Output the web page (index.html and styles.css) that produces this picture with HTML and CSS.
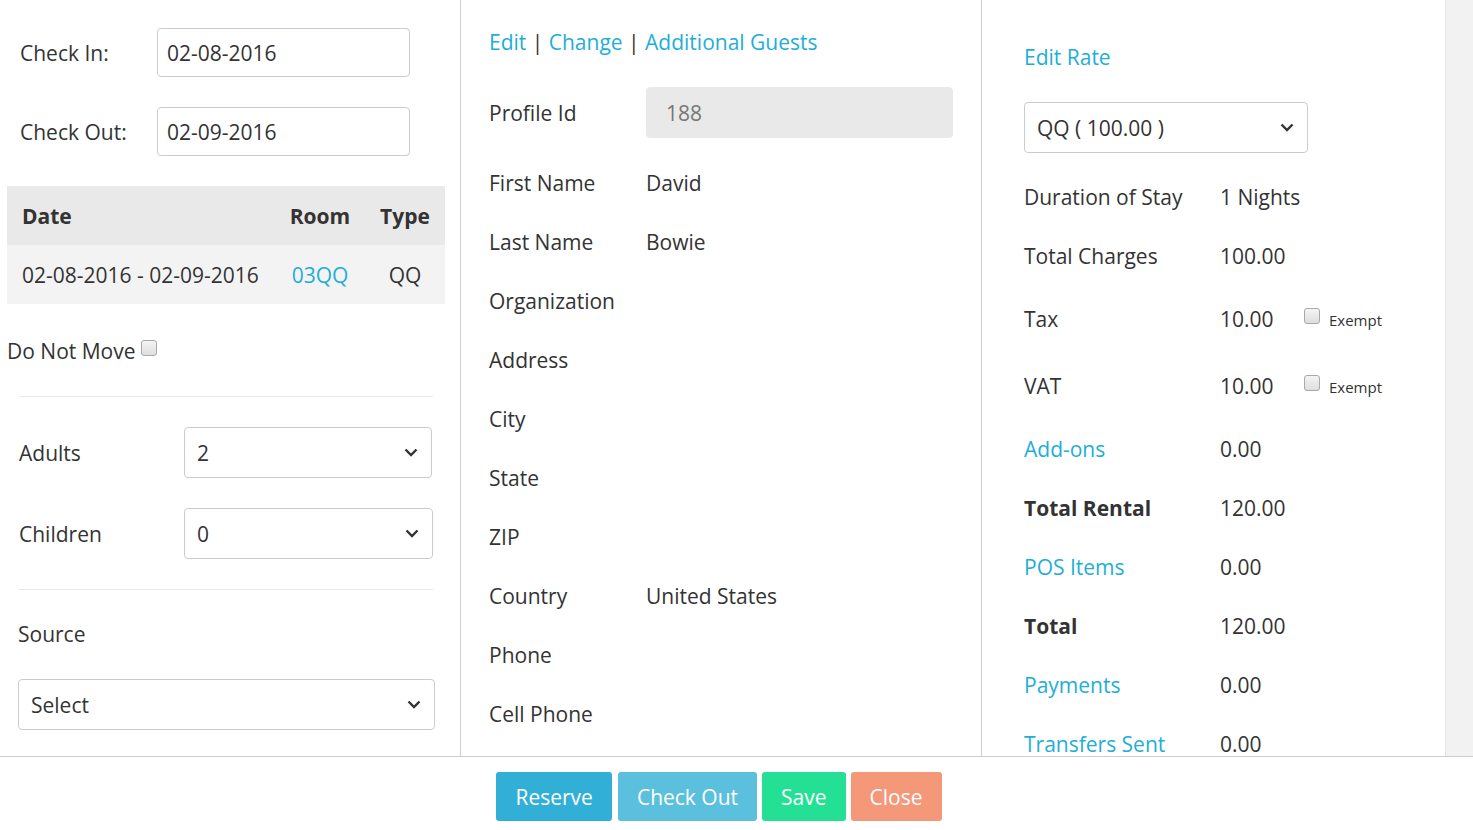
FILE: index.html
```html
<!DOCTYPE html>
<html>
<head>
<meta charset="utf-8">
<link rel="stylesheet" href="styles.css">
</head>
<body>
<div class="page">
  <div class="main">
    <div class="col col1">
      <div class="frow first">
        <label class="flabel">Check In:</label>
        <div class="input date">02-08-2016</div>
      </div>
      <div class="frow">
        <label class="flabel">Check Out:</label>
        <div class="input date">02-09-2016</div>
      </div>
      <div class="rtable">
        <div class="rt-head">
          <div class="c-date">Date</div>
          <div class="c-room">Room</div>
          <div class="c-type">Type</div>
        </div>
        <div class="rt-row">
          <div class="c-date">02-08-2016 - 02-09-2016</div>
          <div class="c-room"><a class="link">03QQ</a></div>
          <div class="c-type">QQ</div>
        </div>
      </div>
      <div class="dnm">Do Not Move <span class="cbox"></span></div>
      <div class="sep"></div>
      <div class="srow first">
        <label class="slabel">Adults</label>
        <div class="select occ">2<svg class="chev" viewBox="0 0 14 9"><path d="M1.5 1.5 L7 7 L12.5 1.5" /></svg></div>
      </div>
      <div class="srow">
        <label class="slabel">Children</label>
        <div class="select occ wide">0<svg class="chev" viewBox="0 0 14 9"><path d="M1.5 1.5 L7 7 L12.5 1.5" /></svg></div>
      </div>
      <div class="sep sep2"></div>
      <div class="source-label">Source</div>
      <div class="select source">Select<svg class="chev" viewBox="0 0 14 9"><path d="M1.5 1.5 L7 7 L12.5 1.5" /></svg></div>
    </div>

    <div class="col col2">
      <div class="links"><a class="link">Edit</a> | <a class="link">Change</a> | <a class="link">Additional Guests</a></div>
      <div class="prow profile">
        <div class="plabel">Profile Id</div>
        <div class="input readonly">188</div>
      </div>
      <div class="prow"><div class="plabel">First Name</div><div class="pval">David</div></div>
      <div class="prow"><div class="plabel">Last Name</div><div class="pval">Bowie</div></div>
      <div class="prow"><div class="plabel">Organization</div><div class="pval"></div></div>
      <div class="prow"><div class="plabel">Address</div><div class="pval"></div></div>
      <div class="prow"><div class="plabel">City</div><div class="pval"></div></div>
      <div class="prow"><div class="plabel">State</div><div class="pval"></div></div>
      <div class="prow"><div class="plabel">ZIP</div><div class="pval"></div></div>
      <div class="prow"><div class="plabel">Country</div><div class="pval">United States</div></div>
      <div class="prow"><div class="plabel">Phone</div><div class="pval"></div></div>
      <div class="prow"><div class="plabel">Cell Phone</div><div class="pval"></div></div>
    </div>

    <div class="col col3">
      <div class="edit-rate"><a class="link">Edit Rate</a></div>
      <div class="select rate">QQ ( 100.00 )<svg class="chev" viewBox="0 0 14 9"><path d="M1.5 1.5 L7 7 L12.5 1.5" /></svg></div>
      <div class="crow"><div class="clabel">Duration of Stay</div><div class="cval">1 Nights</div></div>
      <div class="crow"><div class="clabel">Total Charges</div><div class="cval">100.00</div></div>
      <div class="crow tall"><div class="clabel">Tax</div><div class="cval">10.00</div><span class="cbox ex"></span><span class="exempt">Exempt</span></div>
      <div class="crow tall"><div class="clabel">VAT</div><div class="cval">10.00</div><span class="cbox ex"></span><span class="exempt">Exempt</span></div>
      <div class="crow"><div class="clabel"><a class="link">Add-ons</a></div><div class="cval">0.00</div></div>
      <div class="crow"><div class="clabel bold">Total Rental</div><div class="cval">120.00</div></div>
      <div class="crow"><div class="clabel"><a class="link">POS Items</a></div><div class="cval">0.00</div></div>
      <div class="crow"><div class="clabel bold">Total</div><div class="cval">120.00</div></div>
      <div class="crow"><div class="clabel"><a class="link">Payments</a></div><div class="cval">0.00</div></div>
      <div class="crow"><div class="clabel"><a class="link">Transfers Sent</a></div><div class="cval">0.00</div></div>
    </div>

    <div class="strip"></div>
  </div>

  <div class="footer">
    <button class="btn btn-reserve">Reserve</button>
    <button class="btn btn-checkout">Check Out</button>
    <button class="btn btn-save">Save</button>
    <button class="btn btn-close">Close</button>
  </div>
</div>
</body>
</html>
```

FILE: styles.css
```css
* { box-sizing: border-box; }
html, body { margin: 0; padding: 0; }
body {
  font-family: "Open Sans", "Noto Sans", sans-serif;
  font-size: 21px;
  color: #333;
  background: #fff;
}
.page { width: 1473px; height: 830px; display: flex; flex-direction: column; }
.main {
  height: 757px;
  display: flex;
  overflow: hidden;
  border-bottom: 1px solid #cfcfcf;
}
.col { flex: none; height: 756px; overflow: hidden; }
.col1 { width: 461px; border-right: 1px solid #cfcfcf; }
.col2 { width: 521px; border-right: 1px solid #cfcfcf; padding-left: 28px; }
.col3 { width: 463px; padding-left: 42px; }
.strip { flex: 1; height: 756px; background: #f2f2f2; border-left: 1px solid #e4e4e4; }

.link { color: #1eaed8; text-decoration: none; }

.input {
  border: 1px solid #cccccc;
  border-radius: 4px;
  background: #fff;
  display: flex;
  align-items: center;
}

/* col1 */
.frow { display: flex; align-items: center; height: 49px; margin-top: 30px; padding-left: 20px; }
.frow.first { margin-top: 28px; }
.flabel { width: 137px; }
.input.date { width: 253px; height: 49px; padding-left: 9px; }

.rtable { margin: 30px 0 0 7px; width: 438px; }
.rt-head, .rt-row { display: grid; grid-template-columns: 268px 90px 80px; height: 59px; align-items: center; }
.rt-head { background: #e9e9e9; font-weight: 700; }
.rt-row { background: #f3f3f3; }
.c-date { padding-left: 15px; }
.c-room, .c-type { text-align: center; }

.dnm { margin: 32px 0 0 7px; height: 30px; line-height: 30px; display: flex; align-items: center; gap: 5px; }
.cbox {
  display: inline-block;
  width: 16px; height: 16px;
  border: 1px solid #a9a9a9;
  border-radius: 3px;
  background: linear-gradient(#f4f4f4, #dedede);
}
.dnm .cbox { margin-top: -6px; }

.sep { height: 1px; background: #e8e8e8; margin: 30px 0 0 19px; width: 414px; }
.sep2 { margin-top: 30px; }

.srow { display: flex; align-items: center; height: 51px; margin-top: 30px; padding-left: 19px; }
.slabel { width: 165px; }
.select {
  border: 1px solid #cccccc;
  border-radius: 4px;
  background: #fff;
  display: flex;
  align-items: center;
  justify-content: space-between;
  height: 51px;
  padding: 0 13px 0 12px;
}
.chev { width: 14px; height: 9px; fill: none; stroke: #333; stroke-width: 2.4; }
.select.occ { width: 248px; }
.select.occ.wide { width: 249px; }
.source-label { margin: 29px 0 0 18px; height: 30px; line-height: 30px; }
.select.source { margin: 30px 0 0 18px; width: 417px; padding-left: 12px; }

/* col2 */
.links { margin-top: 27px; height: 30px; line-height: 30px; }
.prow { display: flex; align-items: center; height: 59px; }
.prow.profile { height: 51px; margin-top: 30px; margin-bottom: 15px; }
.plabel { width: 157px; }
.input.readonly { width: 307px; height: 51px; background: #e9e9e9; border-color: #e9e9e9; color: #777; padding-left: 19px; }

/* col3 */
.edit-rate { margin-top: 42px; height: 30px; line-height: 30px; }
.select.rate { margin-top: 30px; width: 284px; }
.crow { display: flex; align-items: center; height: 59px; }
.select.rate + .crow { margin-top: 14px; }
.crow.tall { height: 67px; }
.clabel { width: 196px; }
.clabel.bold { font-weight: 700; }
.cval { width: 84px; }
.cbox.ex { margin-top: -6px; }
.exempt { font-size: 15px; margin-left: 9px; margin-top: 3px; }

/* footer */
.footer {
  flex: 1;
  display: flex;
  justify-content: center;
  align-items: flex-start;
  padding-top: 15px;
  padding-right: 35px;
  gap: 5px;
}
.btn {
  font-family: inherit;
  font-size: 21px;
  color: #fff;
  border: none;
  border-radius: 3px;
  height: 49px;
  padding: 0 19px;
  cursor: pointer;
}
.btn-reserve { background: #31afd6; }
.btn-checkout { background: #5bc0de; margin-left: 1px; }
.btn-save { background: #23e095; }
.btn-close { background: #f59779; }
```
